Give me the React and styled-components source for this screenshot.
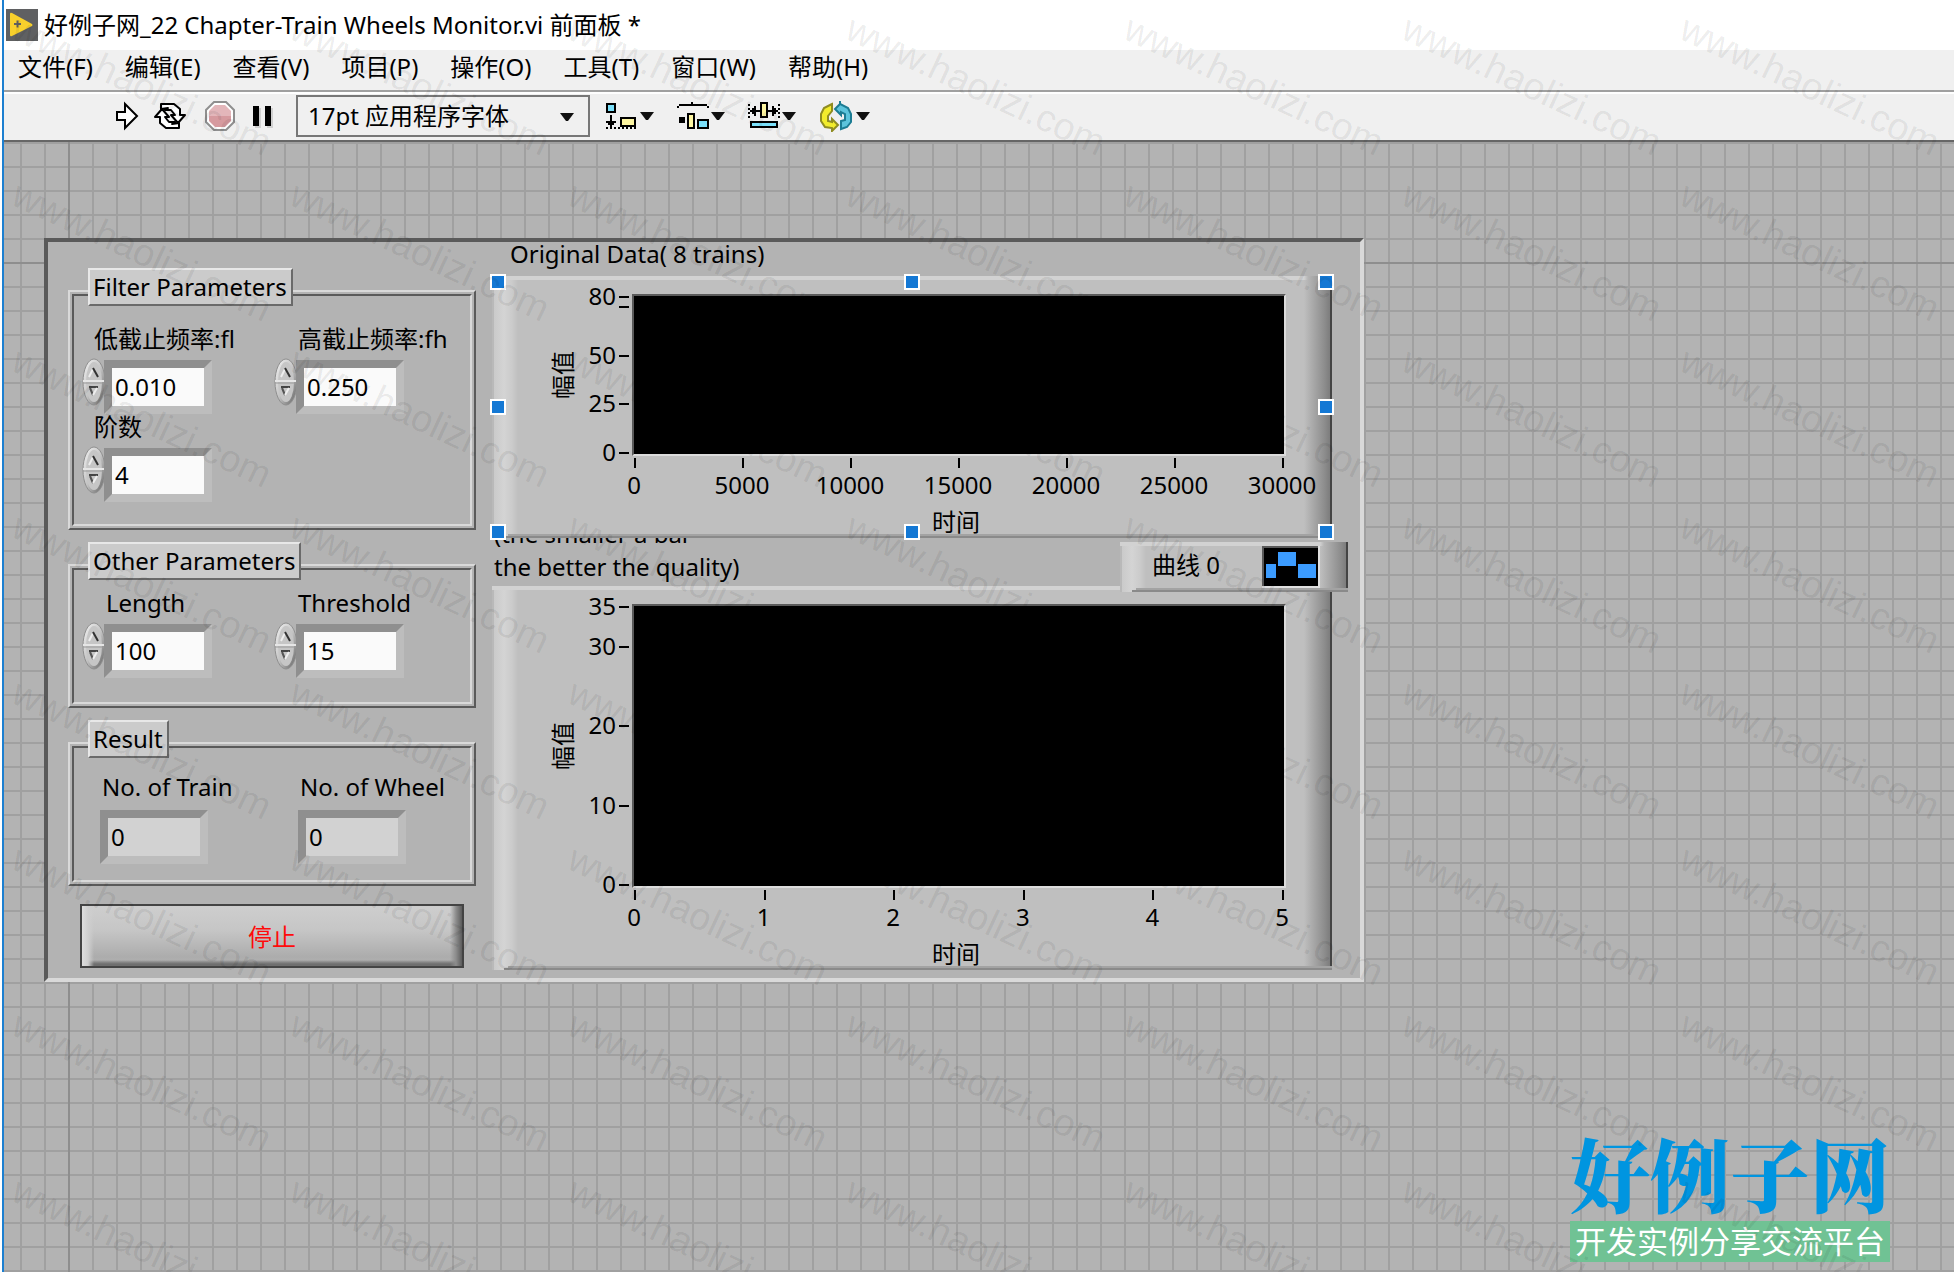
import React, { useState } from "react";
import styled, { createGlobalStyle, css } from "styled-components";

const GlobalStyle = createGlobalStyle`
  *, *::before, *::after { box-sizing: border-box; }
  html, body, #root { height: 100%; }
  body {
    margin: 0;
    background: #fff;
    color: #000;
    font-family: "Noto Sans", "Noto Sans CJK SC", sans-serif;
    font-size: 24px;
    overflow: hidden;
  }
  button, input, select { font: inherit; color: inherit; }
`;

/* ---------- window chrome ---------- */

const Window = styled.div`
  position: relative;
  display: flex;
  flex-direction: column;
  min-height: 100%;
  margin-left: 2px;
  border-left: 2px solid #1c7fd0;
  overflow: hidden;
`;

const TitleBar = styled.header`
  display: flex;
  align-items: center;
  gap: 6px;
  height: 50px;
  padding-left: 2px;
  background: #fff;
`;

const Title = styled.h1`
  margin: 0;
  font-size: 24px;
  font-weight: 400;
  line-height: 32px;
  white-space: nowrap;
`;

const MenuBar = styled.nav`
  display: flex;
  gap: 32px;
  height: 40px;
  padding: 0 14px;
  background: #f0f0f0;
`;

const MenuItem = styled.button`
  padding: 0;
  border: 0;
  background: none;
  line-height: 34px;
  height: 34px;
  white-space: nowrap;
`;

const ToolBar = styled.div`
  display: flex;
  align-items: center;
  height: 52px;
  padding-left: 108px;
  border-top: 2px solid #a0a0a0;
  border-bottom: 2px solid #666;
  background: #f0f0f0;
  box-shadow: inset 0 2px #fff;
`;

const RunTools = styled.div`
  display: flex;
  align-items: center;
  gap: 14px;
  width: 184px;
`;

const ToolButton = styled.button`
  display: flex;
  align-items: center;
  gap: 2px;
  padding: 0;
  border: 0;
  background: none;
`;

const ArrangeTools = styled.div`
  display: flex;
  align-items: center;
  gap: 23px;
  padding-left: 16px;
`;

const FontBox = styled.div`
  position: relative;
  display: flex;
  width: 294px;
  height: 42px;
  svg {
    position: absolute;
    right: 16px;
    top: 18px;
    pointer-events: none;
  }
`;

const FontSelect = styled.select`
  appearance: none;
  width: 100%;
  padding: 0 10px;
  border: 2px solid #777;
  border-radius: 0;
  background: #f0f0f0;
  line-height: 32px;
`;

/* ---------- front panel ---------- */

const Canvas = styled.main`
  flex: 1;
  padding: 96px 40px 0;
  background-color: #b3b3b3;
  background-image:
    linear-gradient(#8e8e8e, #8e8e8e),
    linear-gradient(#8e8e8e, #8e8e8e),
    linear-gradient(to right, #a0a0a0 2px, transparent 2px),
    linear-gradient(#a0a0a0 2px, transparent 2px);
  background-size: 2px 100%, 100% 2px, 24px 24px, 24px 24px;
  background-position: 64px 0, 0 120px, 16px 0, 0 0;
  background-repeat: no-repeat, no-repeat, repeat, repeat;
`;

const Panel = styled.section`
  display: flex;
  gap: 16px;
  width: 100%;
  max-width: 1320px;
  padding: 0 28px 8px 20px;
  border: 4px solid;
  border-color: #5a5a5a #d9d9d9 #d9d9d9 #5a5a5a;
  background: #b3b3b3;
`;

const Settings = styled.div`
  flex: 0 0 408px;
  display: flex;
  flex-direction: column;
  gap: 12px;
  padding-top: 26px;
`;

/* The groove is measured from below the legend, so it rises 16px to cross its middle. */
const Group = styled.fieldset`
  position: relative;
  min-width: 0;
  margin: 0;
  padding: 0;
  border: 0;
  &::before,
  &::after {
    content: "";
    position: absolute;
    border: 2px solid;
    pointer-events: none;
  }
  &::before {
    inset: -16px 0 0 0;
    border-color: #d9d9d9 #5a5a5a #5a5a5a #d9d9d9;
  }
  &::after {
    inset: -12px 4px 4px 4px;
    border-color: #5a5a5a #d9d9d9 #d9d9d9 #5a5a5a;
  }
`;

const GroupTitle = styled.legend`
  position: relative;
  z-index: 1;
  height: 38px;
  margin-left: 20px;
  padding: 0 4px 0 3px;
  border: 2px solid;
  border-color: #e8e8e8 #6a6a6a #6a6a6a #e8e8e8;
  background: #cbcbcb;
  line-height: 34px;
`;

const Fields = styled.div`
  display: grid;
  grid-template-columns: ${(p) => (p.$readOnly ? "198px 1fr" : "192px 1fr")};
  padding: ${(p) => p.$top}px 0 ${(p) => p.$bottom}px ${(p) => (p.$readOnly ? 32 : 14)}px;
`;

const Field = styled.div`
  display: flex;
  flex-direction: column;
  gap: ${(p) => (p.$readOnly ? 10 : 8)}px;
`;

const FieldLabel = styled.label`
  padding-left: ${(p) => p.$indent}px;
  line-height: 26px;
  white-space: nowrap;
`;

const FieldRow = styled.div`
  display: flex;
`;

const SpinButton = styled.button`
  display: block;
  width: 22px;
  height: 50px;
  margin-top: -2px;
  padding: 0;
  border: 0;
  background: none;
  svg {
    display: block;
  }
`;

const NumberBox = styled.input`
  width: 108px;
  height: 54px;
  padding: 0 3px 2px;
  border: 8px solid;
  border-color: #8f8f8f #bdbdbd #bdbdbd #8f8f8f;
  border-radius: 0;
  background: ${(p) => (p.readOnly ? "#d2d2d2" : "#fafafa")};
  outline: none;
  line-height: 32px;
`;

const StopButton = styled.button`
  height: 64px;
  margin: 6px 12px 0;
  padding: 0 0 2px;
  border: 2px solid #444;
  background:
    linear-gradient(to right, #dedede, #cfcfcf 6px, transparent 12px),
    linear-gradient(to left, #5c5c5c, #8c8c8c 6px, transparent 12px),
    linear-gradient(to top, #6f6f6f 2px, #8a8a8a 4px, transparent 6px),
    linear-gradient(#cecece, #c6c6c6 40%, #acacac 85%, #b4b4b4);
  color: #ff0a0a;
`;

/* ---------- graphs ---------- */

const Graphs = styled.div`
  flex: 1;
  min-width: 0;
`;

const GraphTitle = styled.h2`
  height: 34px;
  margin: 0;
  padding-left: 18px;
  font-size: 24px;
  font-weight: 400;
  line-height: 23px;
`;

const GraphCaption = styled.h2`
  display: flex;
  align-items: flex-end;
  height: 48px;
  margin: 0;
  padding: 0 2px 3px;
  overflow: hidden;
  font-size: 24px;
  font-weight: 400;
  line-height: 33px;
`;

const raised = css`
  background:
    linear-gradient(#8a8a8a, #8a8a8a) 12px 100% / 100% 2px no-repeat,
    linear-gradient(#a3a3a3, #a3a3a3) 16px calc(100% - 2px) / 100% 2px no-repeat,
    linear-gradient(to left, #444 2px, #7d7d7d 2px, #8e8e8e 8px, #b5b5b5 24px, transparent 28px) 100% 0 / 28px 100% no-repeat,
    linear-gradient(#d2d2d2, #d2d2d2) 0 0 / 100% 4px no-repeat,
    linear-gradient(to right, #b9b9b9 2px, #cacaca 2px, #d4d4d4 12px, #cbcbcb 20px, transparent 26px),
    #bfbfbf;
`;

const Graph = styled.figure`
  position: relative;
  display: grid;
  grid-template-columns: 83px 57px 1fr;
  margin: 0;
  padding: 18px 46px 2px 0;
  ${raised}
`;

const PlotArea = styled.div`
  height: ${(p) => p.$height}px;
  border: 2px solid;
  border-color: #5a5a5a #dcdcdc #dcdcdc #5a5a5a;
  background: #000;
`;

const YName = styled.div`
  display: flex;
  align-items: center;
  justify-content: flex-end;
  span {
    writing-mode: vertical-rl;
    text-orientation: sideways;
    transform: rotate(180deg);
    line-height: 24px;
  }
`;

const YAxis = styled.div`
  position: relative;
  margin: 2px 4px 2px 0;
`;

const YTick = styled.span`
  position: absolute;
  right: -1px;
  width: 10px;
  height: 2px;
  background: #000;
`;

const YLabel = styled.span`
  position: absolute;
  right: 12px;
  line-height: 24px;
  transform: translateY(-50%);
`;

const XAxis = styled.div`
  grid-column: 3;
  position: relative;
  height: 52px;
  margin: 0 4px 0 2px;
`;

const XTick = styled.span`
  position: absolute;
  top: 2px;
  width: 2px;
  height: 10px;
  background: #000;
`;

const XLabel = styled.span`
  position: absolute;
  top: 17px;
  line-height: 24px;
  transform: translateX(-50%);
`;

const XName = styled.div`
  grid-column: 3;
  padding-right: 6px;
  line-height: 28px;
  text-align: center;
`;

const Handle = styled.i`
  position: absolute;
  z-index: 2;
  left: ${(p) => p.$x};
  top: ${(p) => p.$y};
  width: 16px;
  height: 16px;
  border: 2px solid #fff;
  background: #1478d4;
`;

const Stack = styled.div`
  position: relative;
`;

const Legend = styled.div`
  position: absolute;
  z-index: 1;
  top: -44px;
  right: -16px;
  display: flex;
  align-items: center;
  justify-content: space-between;
  width: 228px;
  height: 50px;
  padding: 0 28px 4px 32px;
  line-height: 32px;
  ${raised}
`;

const Swatch = styled.svg`
  display: block;
  margin-top: 4px;
`;

/* ---------- overlays ---------- */

const Watermarks = styled.div`
  position: absolute;
  z-index: 5;
  inset: 0;
  display: grid;
  grid-template-columns: repeat(auto-fill, 278px);
  grid-auto-rows: 166px;
  padding-left: 20px;
  margin-right: -278px;
  overflow: hidden;
  pointer-events: none;
  color: rgba(0, 0, 0, 0.08);
  font-family: "Liberation Sans", Arial, sans-serif;
  font-size: 38px;
  line-height: 44px;
  span {
    transform: rotate(25deg);
    transform-origin: 0 0;
    white-space: nowrap;
    height: 44px;
    margin-top: 6px;
  }
`;

const Brand = styled.aside`
  position: absolute;
  z-index: 4;
  right: 64px;
  bottom: 10px;
  width: 320px;
  text-align: center;
`;

const BrandName = styled.div`
  padding-bottom: 5px;
  color: #0095e0;
  font-family: "Noto Serif CJK SC", "Noto Sans CJK SC", sans-serif;
  font-size: 80px;
  font-weight: 900;
  line-height: 88px;
  white-space: nowrap;
`;

const BrandLine = styled.div`
  padding-bottom: 3px;
  background: #70c294;
  color: #fff;
  font-family: "Noto Sans CJK SC", sans-serif;
  font-size: 31px;
  line-height: 38px;
  white-space: nowrap;
`;

/* ---------- icons ---------- */

const Caret = () => (
  <svg width="14" height="8" viewBox="0 0 14 8" aria-hidden="true">
    <path d="M0 0h14L8 8H6z" fill="#111" />
  </svg>
);

const AppIcon = () => (
  <svg width="32" height="32" viewBox="0 0 32 32" aria-hidden="true">
    <rect width="32" height="32" fill="#5f6062" />
    <path d="M4 5q0-2 2-1l20 11q1 1 0 2L6 27q-2 1-2-1z" fill="#f8d02c" />
    <path d="M8 15h7M11.500 11.500v7" stroke="#5f6062" strokeWidth="2" />
  </svg>
);

const RunIcon = () => (
  <svg width="28" height="30" viewBox="0 0 28 30" aria-hidden="true">
    <path d="M5 11h8V3l12 12-12 12v-8H5z" fill="#fff" stroke="#000" strokeWidth="2" />
  </svg>
);

const RunLoopIcon = () => (
  <svg width="36" height="30" viewBox="0 0 36 30" aria-hidden="true">
    <g fill="#fff" stroke="#000" strokeWidth="2" strokeLinejoin="round">
      <path d="M7 8V3h13l6 5v6h5l-7 8-7-8h4l-4-5h-6l3-2z" />
      <path d="M25 22v5H12l-6-5v-6H1l7-8 7 8h-4l4 5h6l-3 2z" />
    </g>
  </svg>
);

const AbortIcon = () => (
  <svg width="32" height="32" viewBox="0 0 32 32" aria-hidden="true">
    <path d="M10 2h12l8 8v12l-8 8H10l-8-8V10z" fill="#fff" stroke="#8f8f8f" strokeWidth="2" />
    <path d="M11 5h10l6 6v5H5v-5z" fill="#e3b6ba" />
    <path d="M5 16h22v5l-6 6H11l-6-6z" fill="#d69a9f" />
  </svg>
);

const PauseIcon = () => (
  <svg width="24" height="24" viewBox="0 0 24 24" aria-hidden="true">
    <path d="M5 4h6v20H5zM17 4h6v20h-6z" fill="#d0d0d0" />
    <path d="M3 2h6v20H3zM15 2h6v20h-6z" fill="#000" />
  </svg>
);

const AlignIcon = () => (
  <svg width="32" height="28" viewBox="0 0 32 28" shapeRendering="crispEdges" aria-hidden="true">
    <rect x="1" y="2" width="8" height="8" fill="#7be0fa" stroke="#000" strokeWidth="2" />
    <rect x="15" y="16" width="14" height="8" fill="#fdf6a2" stroke="#000" strokeWidth="2" />
    <path d="M4 13h2v6h4v2H8v2H6v2H4v-2H2v-2H0v-2h4z" fill="#000" />
    <path d="M0 26h30" stroke="#000" strokeWidth="2" strokeDasharray="2 2" />
  </svg>
);

const DistributeIcon = () => (
  <svg width="32" height="28" viewBox="0 0 32 28" shapeRendering="crispEdges" aria-hidden="true">
    <path d="M0 4h2V2h12V0h2v2h14v2h2v2h-2V4H2v2H0z" fill="#000" />
    <rect x="2" y="15" width="6" height="6" fill="#000" />
    <rect x="11" y="12" width="6" height="14" fill="#fdf6a2" stroke="#000" strokeWidth="2" />
    <rect x="21" y="18" width="10" height="8" fill="#7be0fa" stroke="#000" strokeWidth="2" />
  </svg>
);

const ResizeIcon = () => (
  <svg width="32" height="28" viewBox="0 0 32 28" shapeRendering="crispEdges" aria-hidden="true">
    <path d="M1 2v16M31 2v16" stroke="#000" strokeWidth="2" strokeDasharray="2 2" />
    <path d="M2 8h2V6h2V4h2v4h4v2H8v4H6v-2H4v-2H2zM30 8h-2V6h-2V4h-2v4h-4v2h4v4h2v-2h2v-2h2z" fill="#000" />
    <rect x="13" y="1" width="6" height="14" fill="#fdf6a2" stroke="#000" strokeWidth="2" />
    <rect x="3" y="20" width="26" height="5" fill="#7be0fa" stroke="#000" strokeWidth="2" />
  </svg>
);

const ReorderIcon = () => (
  <svg width="35" height="32" viewBox="0 0 35 32" aria-hidden="true">
    <path
      d="M13 4 5 8 2 14v7l4 6 7 1v3l6-6-6-6v3l-4-1v-5l4-5z"
      fill="#f2ec2c"
      stroke="#8f8c22"
      strokeWidth="2"
    />
    <path
      d="M21 1v3l8 4 3 6v8l-4 5-6 2v-8l4-1v-6l-4-2v3l-6-6 6-6"
      fill="#5cc4dc"
      stroke="#1b7c93"
      strokeWidth="2"
    />
  </svg>
);

const SpinIcon = () => (
  <svg width="24" height="50" viewBox="0 0 24 50" aria-hidden="true">
    <defs>
      <linearGradient id="spin" x1="0" y1="0" x2="1" y2="1">
        <stop offset="0" stopColor="#f4f4f4" />
        <stop offset="0.5" stopColor="#c4c4c4" />
        <stop offset="1" stopColor="#5c5c5c" />
      </linearGradient>
    </defs>
    <ellipse cx="12" cy="24" rx="11" ry="23" fill="url(#spin)" stroke="#8f8f8f" />
    <ellipse cx="12" cy="24" rx="8" ry="20" fill="#c6c6c6" />
    <path d="M1 23h21" stroke="#e6e6e6" strokeWidth="2" />
    <path d="M1 25h21" stroke="#9a9a9a" />
    <path d="M7 19l4-8" stroke="#eee" strokeWidth="2" />
    <path d="M11 10l5 9" stroke="#333" strokeWidth="2" />
    <path d="M7 29h9" stroke="#444" strokeWidth="2" />
    <path d="M8 30l3 7" stroke="#555" strokeWidth="2" />
    <path d="M11 37l4-7" stroke="#eee" strokeWidth="2" />
  </svg>
);

/* ---------- composed parts ---------- */

function NumericField({ id, label, value, indent, readOnly }) {
  const [text, setText] = useState(value);
  return (
    <Field $readOnly={readOnly}>
      <FieldLabel htmlFor={id} $indent={indent}>
        {label}
      </FieldLabel>
      <FieldRow>
        {!readOnly && (
          <SpinButton type="button" aria-label="±">
            <SpinIcon />
          </SpinButton>
        )}
        <NumberBox id={id} value={text} readOnly={readOnly} onChange={(e) => setText(e.target.value)} />
      </FieldRow>
    </Field>
  );
}

const at = (fraction) => `calc((100% - 2px) * ${fraction})`;

function Chart({ height, yTicks, yUnlabelled = [], xTicks, children }) {
  const yMax = yTicks[0];
  const xMax = xTicks[xTicks.length - 1];
  return (
    <Graph>
      <YName>
        <span>幅值</span>
      </YName>
      <YAxis>
        {yTicks.map((v) => (
          <React.Fragment key={v}>
            <YLabel style={{ top: at((yMax - v) / yMax) }}>{v}</YLabel>
            <YTick style={{ top: at((yMax - v) / yMax) }} />
          </React.Fragment>
        ))}
        {yUnlabelled.map((v) => (
          <YTick key={v} style={{ top: at((yMax - v) / yMax) }} />
        ))}
      </YAxis>
      <PlotArea $height={height} />
      <XAxis>
        {xTicks.map((v) => (
          <React.Fragment key={v}>
            <XTick style={{ left: `${(v / xMax) * 100}%` }} />
            <XLabel style={{ left: `${(v / xMax) * 100}%` }}>{v}</XLabel>
          </React.Fragment>
        ))}
      </XAxis>
      <XName>时间</XName>
      {children}
    </Graph>
  );
}

const menus = ["文件(F)", "编辑(E)", "查看(V)", "项目(P)", "操作(O)", "工具(T)", "窗口(W)", "帮助(H)"];

const runTools = [RunIcon, RunLoopIcon, AbortIcon, PauseIcon];
const arrangeTools = [AlignIcon, DistributeIcon, ResizeIcon, ReorderIcon];

const handleStops = ["-2px", "calc(50% - 8px)", "calc(100% - 14px)"];

export default function App() {
  return (
    <>
      <GlobalStyle />
      <Window>
        <TitleBar>
          <AppIcon />
          <Title>好例子网_22 Chapter-Train Wheels Monitor.vi 前面板 *</Title>
        </TitleBar>
        <MenuBar>
          {menus.map((m) => (
            <MenuItem key={m} type="button">
              {m}
            </MenuItem>
          ))}
        </MenuBar>
        <ToolBar>
          <RunTools>
            {runTools.map((Icon, i) => (
              <ToolButton key={i} type="button">
                <Icon />
              </ToolButton>
            ))}
          </RunTools>
          <FontBox>
            <FontSelect aria-label="17pt 应用程序字体" defaultValue="app">
              <option value="app">17pt 应用程序字体</option>
            </FontSelect>
            <Caret />
          </FontBox>
          <ArrangeTools>
            {arrangeTools.map((Icon, i) => (
              <ToolButton key={i} type="button">
                <Icon />
                <Caret />
              </ToolButton>
            ))}
          </ArrangeTools>
        </ToolBar>

        <Canvas>
          <Panel>
            <Settings>
              <Group>
                <GroupTitle>Filter Parameters</GroupTitle>
                <Fields $top={20} $bottom={28}>
                  <NumericField id="fl" label="低截止频率:fl" value="0.010" indent={12} />
                  <NumericField id="fh" label="高截止频率:fh" value="0.250" indent={24} />
                  <NumericField id="order" label="阶数" value="4" indent={12} />
                </Fields>
              </Group>
              <Group>
                <GroupTitle>Other Parameters</GroupTitle>
                <Fields $top={10} $bottom={30}>
                  <NumericField id="length" label="Length" value="100" indent={24} />
                  <NumericField id="threshold" label="Threshold" value="15" indent={24} />
                </Fields>
              </Group>
              <Group>
                <GroupTitle>Result</GroupTitle>
                <Fields $top={16} $bottom={22} $readOnly>
                  <NumericField id="trains" label="No. of Train" value="0" indent={2} readOnly />
                  <NumericField id="wheels" label="No. of Wheel" value="0" indent={2} readOnly />
                </Fields>
              </Group>
              <StopButton type="button">停止</StopButton>
            </Settings>

            <Graphs>
              <GraphTitle>Original Data( 8 trains)</GraphTitle>
              <Chart
                height={162}
                yTicks={[80, 50, 25, 0]}
                yUnlabelled={[75]}
                xTicks={[0, 5000, 10000, 15000, 20000, 25000, 30000]}
              >
                {handleStops.map((x, i) =>
                  handleStops.map((y, j) => (i === 1 && j === 1 ? null : <Handle key={`${i}${j}`} $x={x} $y={y} />))
                )}
              </Chart>
              <GraphCaption>
                <span>
                  (the smaller a bar
                  <br />
                  the better the quality)
                </span>
              </GraphCaption>
              <Stack>
                <Chart height={284} yTicks={[35, 30, 20, 10, 0]} xTicks={[0, 1, 2, 3, 4, 5]} />
                <Legend>
                  <span>曲线 0</span>
                  <Swatch width="58" height="42" viewBox="0 0 58 42" aria-hidden="true">
                    <rect width="58" height="42" fill="#e0e0e0" />
                    <rect width="56" height="40" fill="#5a5a5a" />
                    <rect x="2" y="2" width="54" height="38" fill="#000" />
                    <path d="M4 18h10v14H4zM16 6h18v14H16zM36 18h18v14H36z" fill="#3c9cff" />
                  </Swatch>
                </Legend>
              </Stack>
            </Graphs>
          </Panel>
        </Canvas>

        <Brand>
          <BrandName>好例子网</BrandName>
          <BrandLine>开发实例分享交流平台</BrandLine>
        </Brand>
        <Watermarks aria-hidden="true">
          {Array.from({ length: 64 }, (_, i) => (
            <span key={i}>www.haolizi.com</span>
          ))}
        </Watermarks>
      </Window>
    </>
  );
}
